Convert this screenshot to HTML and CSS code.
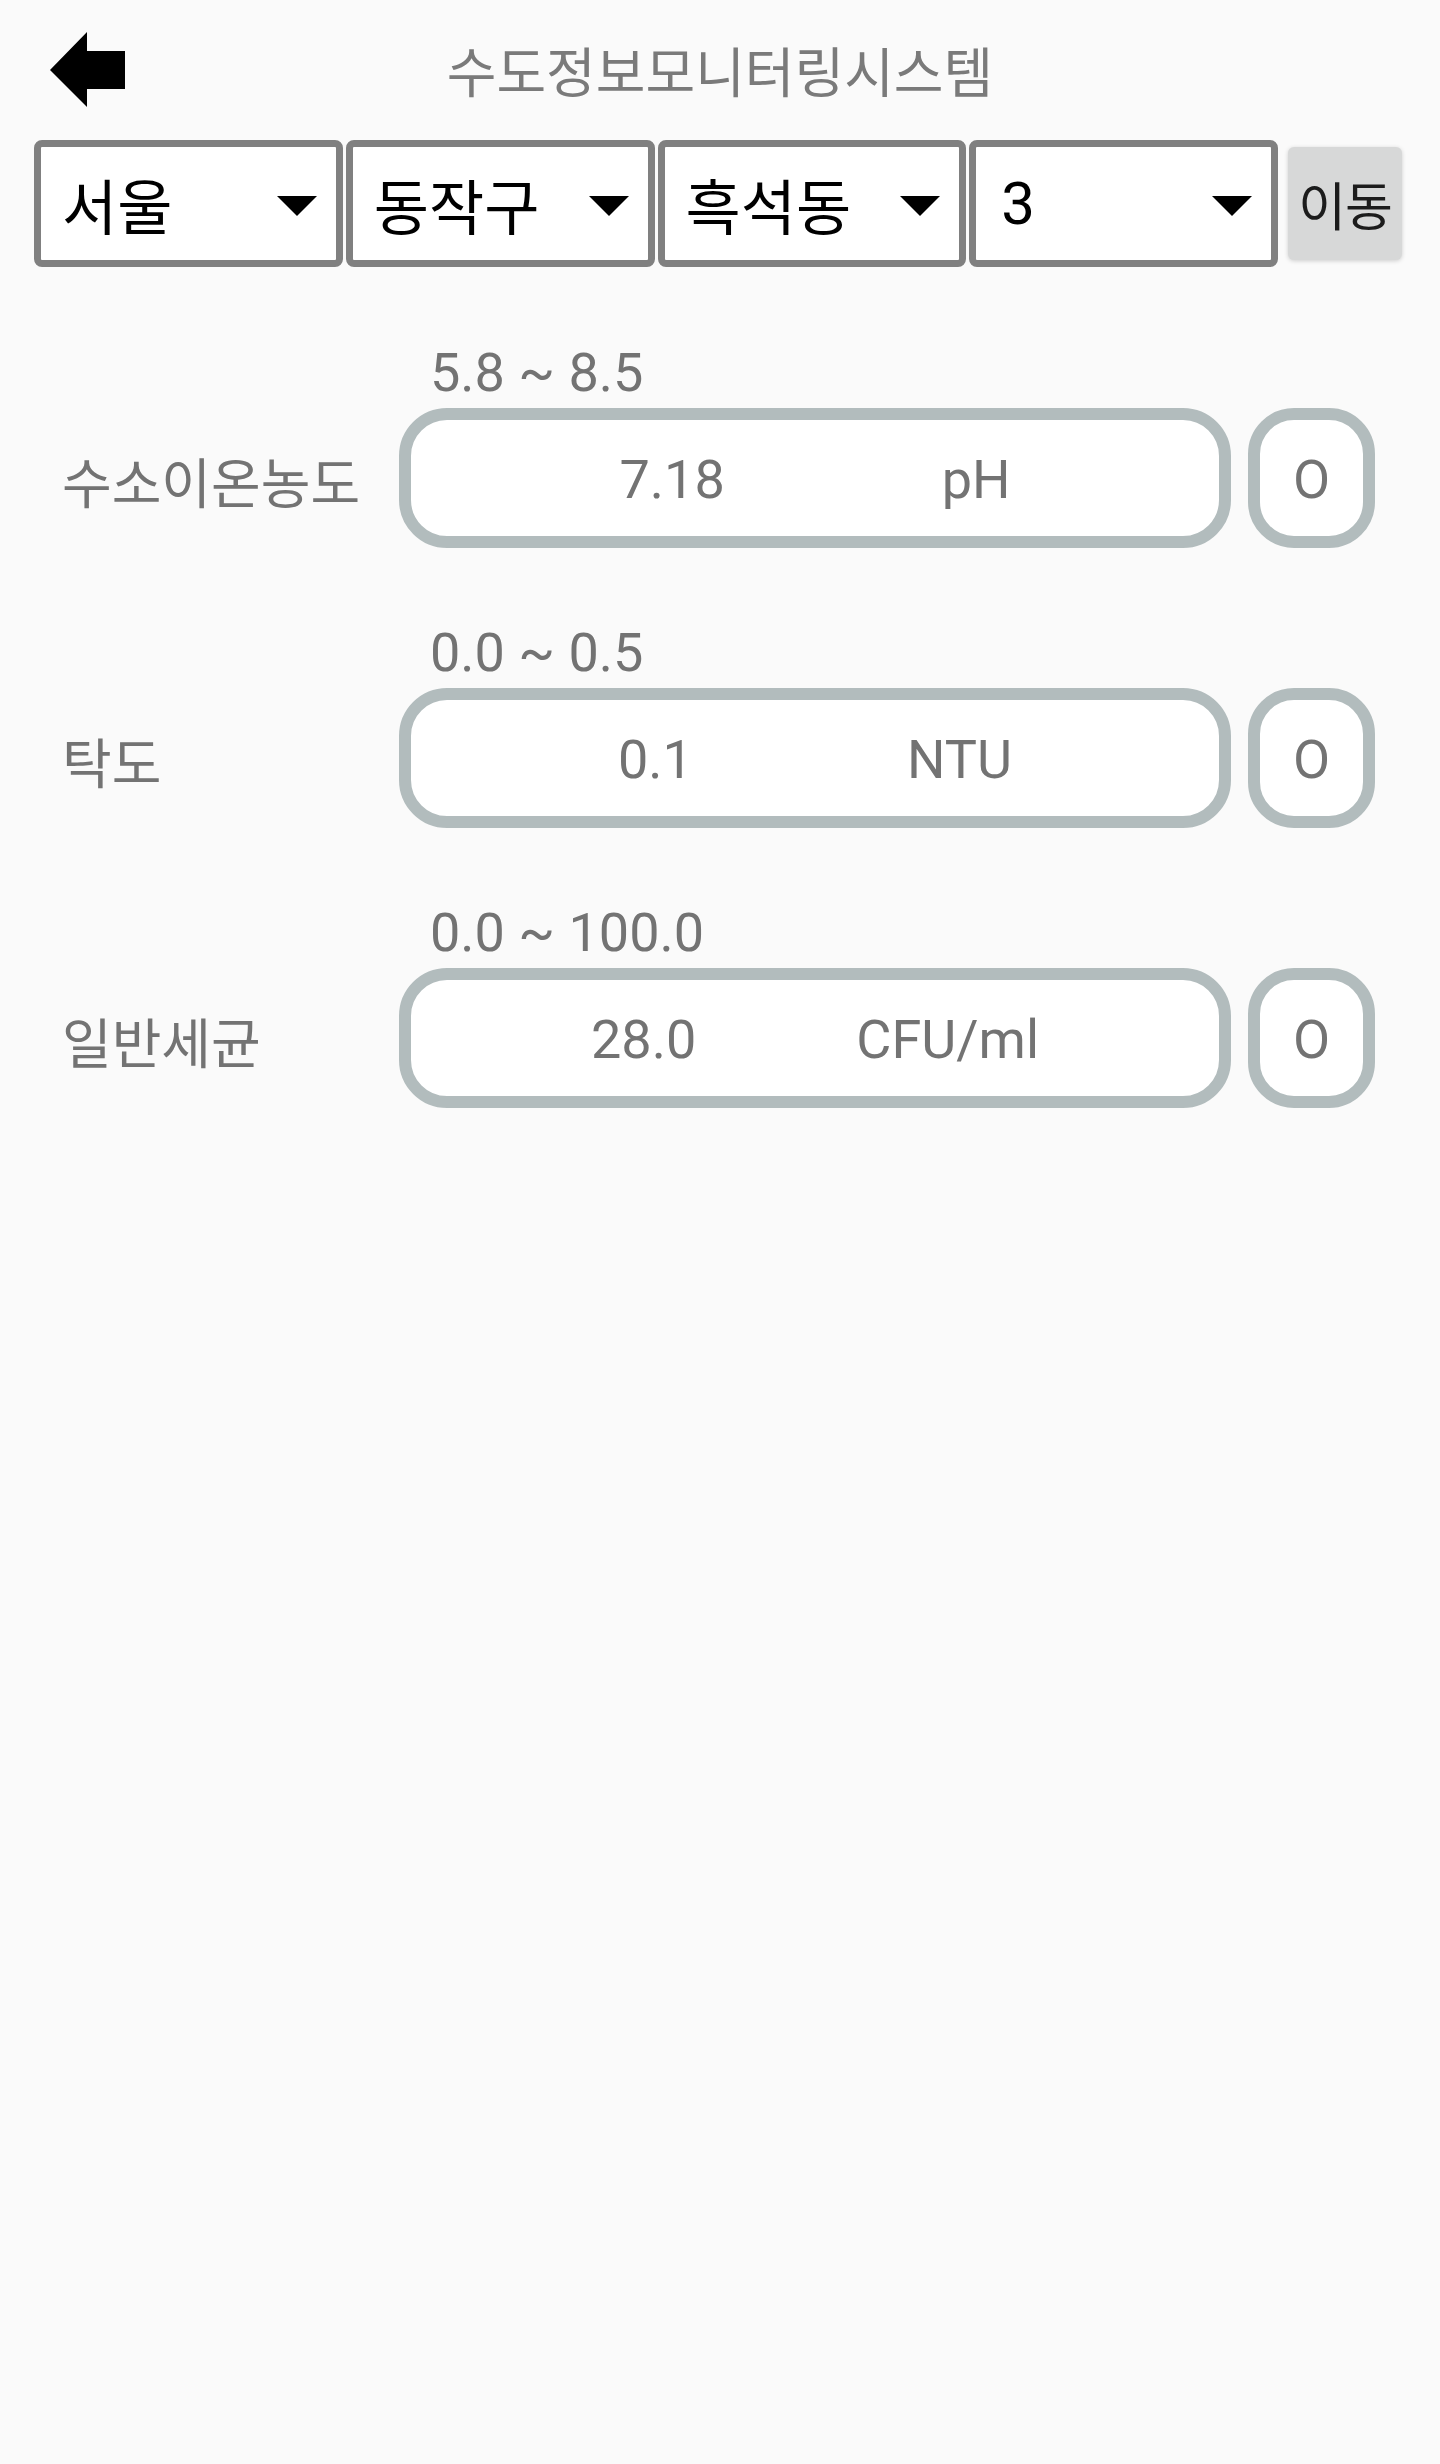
FILE: index.html
```html
<!DOCTYPE html>
<html lang="ko">
<head>
<meta charset="utf-8">
<title>수도정보모니터링시스템</title>
<link rel="stylesheet" href="styles.css">
</head>
<body>
<div class="screen">
  <header class="appbar">
    <div class="back">
      <svg width="80" height="78" viewBox="0 0 80 78" aria-hidden="true">
        <polygon points="2,39 39,1 39,20 77,20 77,58 39,58 39,76" fill="#000"/>
      </svg>
    </div>
    <h1 class="title">수도정보모니터링시스템</h1>
    <div></div>
  </header>

  <div class="toolbar">
    <div class="select"><span class="sel-text">서울</span><i class="caret"></i></div>
    <div class="select"><span class="sel-text">동작구</span><i class="caret"></i></div>
    <div class="select"><span class="sel-text">흑석동</span><i class="caret"></i></div>
    <div class="select"><span class="sel-text num">3</span><i class="caret"></i></div>
    <button class="go">이동</button>
  </div>

  <main class="list">
    <section class="row">
      <div class="range">5.8 ~ 8.5</div>
      <div class="label">수소이온농도</div>
      <div class="field"><span class="val">7.18</span><span class="unit">pH</span></div>
      <div class="status">O</div>
    </section>
    <section class="row">
      <div class="range">0.0 ~ 0.5</div>
      <div class="label">탁도</div>
      <div class="field"><span class="val">0.1</span><span class="unit">NTU</span></div>
      <div class="status">O</div>
    </section>
    <section class="row">
      <div class="range">0.0 ~ 100.0</div>
      <div class="label">일반세균</div>
      <div class="field"><span class="val">28.0</span><span class="unit">CFU/ml</span></div>
      <div class="status">O</div>
    </section>
  </main>
</div>
</body>
</html>
```

FILE: styles.css
```css
html, body {
  margin: 0;
  padding: 0;
  background: #fafafa;
}

.screen {
  width: 1440px;
  min-height: 2464px;
  background: #fafafa;
  font-family: "Noto Sans CJK KR", "Noto Sans", sans-serif;
}

.appbar {
  display: grid;
  grid-template-columns: 1fr auto 1fr;
  align-items: center;
  height: 140px;
}

.back {
  display: flex;
  align-items: center;
  padding-left: 48px;
}

.back svg {
  display: block;
}

.title {
  margin: 0;
  font-family: "Noto Sans CJK KR", sans-serif;
  font-weight: 400;
  font-size: 54px;
  line-height: 64px;
  color: #7a7a7a;
  white-space: nowrap;
}

.toolbar {
  display: flex;
  align-items: center;
  gap: 3px;
  height: 127px;
  padding: 0 38px 0 34px;
}

.select {
  flex: 1 1 0;
  min-width: 0;
  height: 127px;
  box-sizing: border-box;
  border: 7px solid #808080;
  border-radius: 8px;
  background: #fff;
  display: flex;
  align-items: center;
  justify-content: space-between;
  padding: 0 19px 0 21px;
}

.sel-text {
  font-family: "Noto Sans CJK KR", sans-serif;
  font-size: 60px;
  color: #000;
  white-space: nowrap;
}

.sel-text.num {
  font-family: Roboto, "Noto Sans CJK KR", sans-serif;
  font-size: 60px;
  margin-left: 4px;
}

.caret {
  display: block;
  width: 0;
  height: 0;
  border-left: 20px solid transparent;
  border-right: 20px solid transparent;
  border-top: 20px solid #000;
  margin-top: 5px;
}

.go {
  flex: 0 0 114px;
  margin-left: 7px;
  height: 113px;
  padding: 0;
  border: none;
  border-radius: 6px;
  background: #d7d8d8;
  box-shadow: 0 1px 4px rgba(0, 0, 0, 0.18);
  font-family: "Noto Sans CJK KR", sans-serif;
  font-size: 52px;
  letter-spacing: -1px;
  color: #1c1c1c;
}

.list {
  padding-top: 76px;
}

.row {
  display: grid;
  grid-template-columns: 320px 832px 127px;
  grid-template-rows: 60px 140px;
  column-gap: 17px;
  row-gap: 5px;
  padding-left: 62px;
}

.row + .row {
  margin-top: 75px;
}

.range {
  grid-column: 2;
  grid-row: 1;
  padding-left: 31px;
  font-family: Roboto, sans-serif;
  font-size: 54px;
  line-height: 60px;
  color: #737373;
}

.label {
  grid-column: 1;
  grid-row: 2;
  align-self: center;
  padding-top: 4px;
  font-family: "Noto Sans CJK KR", sans-serif;
  font-size: 54px;
  color: #737373;
  white-space: nowrap;
}

.field {
  grid-column: 2;
  grid-row: 2;
  box-sizing: border-box;
  border: 12px solid #b2bcbd;
  border-radius: 48px;
  background: #fff;
  display: flex;
  align-items: center;
  padding: 3px 100px 0;
}

.val,
.unit {
  flex: 1 1 auto;
  text-align: center;
  font-family: Roboto, sans-serif;
  font-size: 54px;
  color: #737373;
  white-space: nowrap;
}

.status {
  grid-column: 3;
  grid-row: 2;
  box-sizing: border-box;
  border: 12px solid #b2bcbd;
  border-radius: 46px;
  background: #fff;
  display: flex;
  align-items: center;
  justify-content: center;
  padding-top: 3px;
  font-family: Roboto, sans-serif;
  font-size: 54px;
  color: #737373;
}
```
